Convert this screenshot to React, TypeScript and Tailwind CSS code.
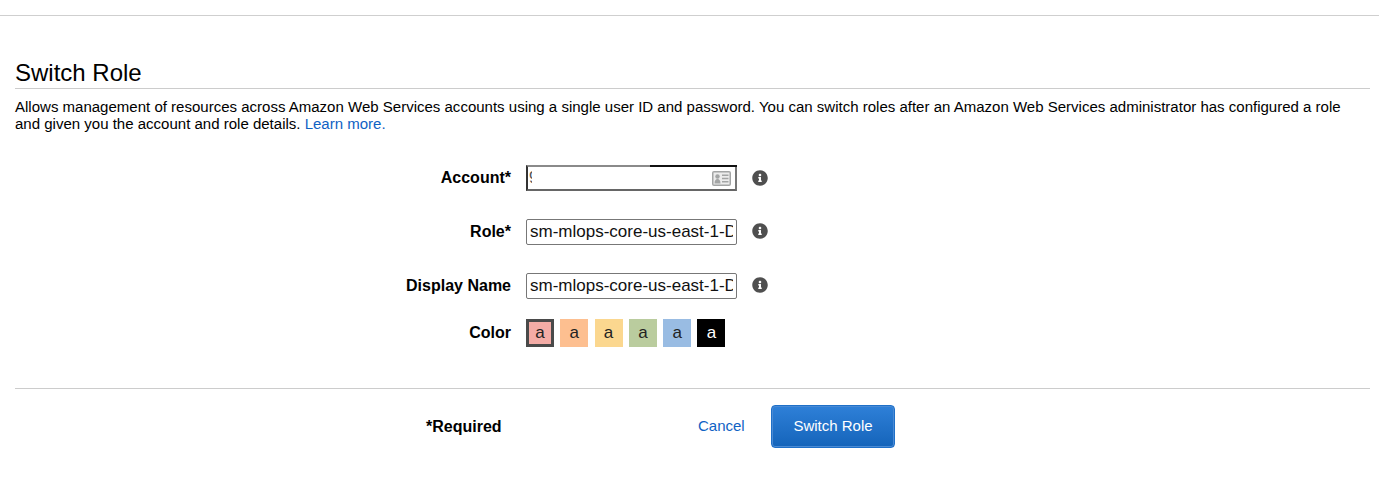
import { FaInfoCircle } from 'react-icons/fa';

const swatches = [
  { color: 'bg-[#f4aca6]', text: 'text-[#222222]', selected: true },
  { color: 'bg-[#fdbf90]', text: 'text-[#222222]' },
  { color: 'bg-[#fbd78f]', text: 'text-[#222222]' },
  { color: 'bg-[#bacc9e]', text: 'text-[#222222]' },
  { color: 'bg-[#99bce3]', text: 'text-[#222222]' },
  { color: 'bg-black', text: 'text-white' },
];

function IdCard() {
  return (
    <svg width="19" height="15" viewBox="0 0 19 15" className="shrink-0">
      <rect x="0" y="0" width="19" height="15" rx="2" fill="#a3a5a5" />
      <rect x="1.500" y="1.500" width="16" height="12" fill="#ececec" />
      <circle cx="5.500" cy="5.500" r="2.200" fill="#a3a5a5" />
      <path d="M2.500 12.500c0-2.900 1.200-4.500 3-4.500s3 1.600 3 4.500z" fill="#a3a5a5" />
      <rect x="10" y="3.500" width="6.500" height="1.500" fill="#a3a5a5" />
      <rect x="10" y="6.750" width="6.500" height="1.500" fill="#a3a5a5" />
      <rect x="10" y="10" width="6.500" height="1.500" fill="#a3a5a5" />
    </svg>
  );
}

function Info({ className = '' }: { className?: string }) {
  return <FaInfoCircle size={16} className={`text-[#4f4f4f] ml-[15px] shrink-0 ${className}`} />;
}

function Row({ label, value, className }: { label: string; value: string; className: string }) {
  return (
    <div className={`flex items-center h-[26px] ${className}`}>
      <label className="w-[511px] pr-[15px] text-right font-bold text-[16px]">{label}</label>
      <input
        readOnly
        value={value}
        className="w-[211px] h-[26px] border border-[#777777] rounded-[2px] px-[3px] text-[17px] text-[#111111] outline-none"
      />
      <Info className="mb-[2px]" />
    </div>
  );
}

export default function App() {
  return (
    <div className="h-[482px] bg-white text-black overflow-hidden font-['Liberation_Sans',Arial,sans-serif]">
      <div className="h-[16px] border-b border-[#cfcfcf]" />
      <div className="pl-[15px] pr-[9px]">
        <h1 className="mt-[43px] h-[29px] text-[24px] leading-[27px] border-b border-[#cccccc] box-content">Switch Role</h1>
        <p className="mt-[9px] w-[1335px] text-[15.030px] leading-[17px]">
          Allows management of resources across Amazon Web Services accounts using a single user ID and password. You can switch roles after an Amazon Web Services administrator has configured a role and given you the account and role details.{' '}
          <a className="text-[#0f62c4]">Learn more.</a>
        </p>

        <div className="mt-[33px]">
          <div className="flex items-center h-[26px] mb-[28px]">
            <label className="w-[511px] pr-[15px] text-right font-bold text-[16px]">Account*</label>
            <div className="relative w-[211px] h-[26px] border-2 border-l-[#333333] border-t-[#8a8a8a] border-r-[#777777] border-b-[#666666] flex items-center justify-between pl-[1px] pr-[4px]">
              <span className="text-[16px] w-[3px] overflow-hidden text-[#555555]">9</span>
              <IdCard />
              <span className="absolute top-[-2px] right-[-2px] w-[87px] h-[2px] bg-[#111111]" />
            </div>
            <Info />
          </div>
          <Row label="Role*" value="sm-mlops-core-us-east-1-Dev" className="mb-[27.500px]" />
          <Row label="Display Name" value="sm-mlops-core-us-east-1-Dev" className="mb-[20.500px]" />

          <div className="flex items-center h-[28px]">
            <label className="w-[511px] pr-[15px] text-right font-bold text-[16px]">Color</label>
            <div className="flex gap-[6.300px]">
              {swatches.map((s, i) => (
                <div
                  key={i}
                  className={`w-[28px] h-[28px] flex items-center justify-center text-[17px] ${s.color} ${s.text} ${s.selected ? 'border-[3px] border-[#4a4a4a]' : ''}`}
                >
                  a
                </div>
              ))}
            </div>
          </div>
        </div>

        <div className="mt-[41px] border-t border-[#cccccc] flex items-center pt-[16px]">
          <div className="w-[411px]" />
          <span className="font-bold text-[16px] w-[272px]">*Required</span>
          <a className="text-[15px] text-[#0f62c4] w-[73px]">Cancel</a>
          <button className="w-[124px] h-[43px] rounded-[4px] border border-[#1f70c8] shadow-[inset_0_0_0_1px_#4a8ad4] bg-gradient-to-b from-[#2e80d8] to-[#1464ba] text-white text-[15px]">
            Switch Role
          </button>
        </div>
      </div>
    </div>
  );
}
